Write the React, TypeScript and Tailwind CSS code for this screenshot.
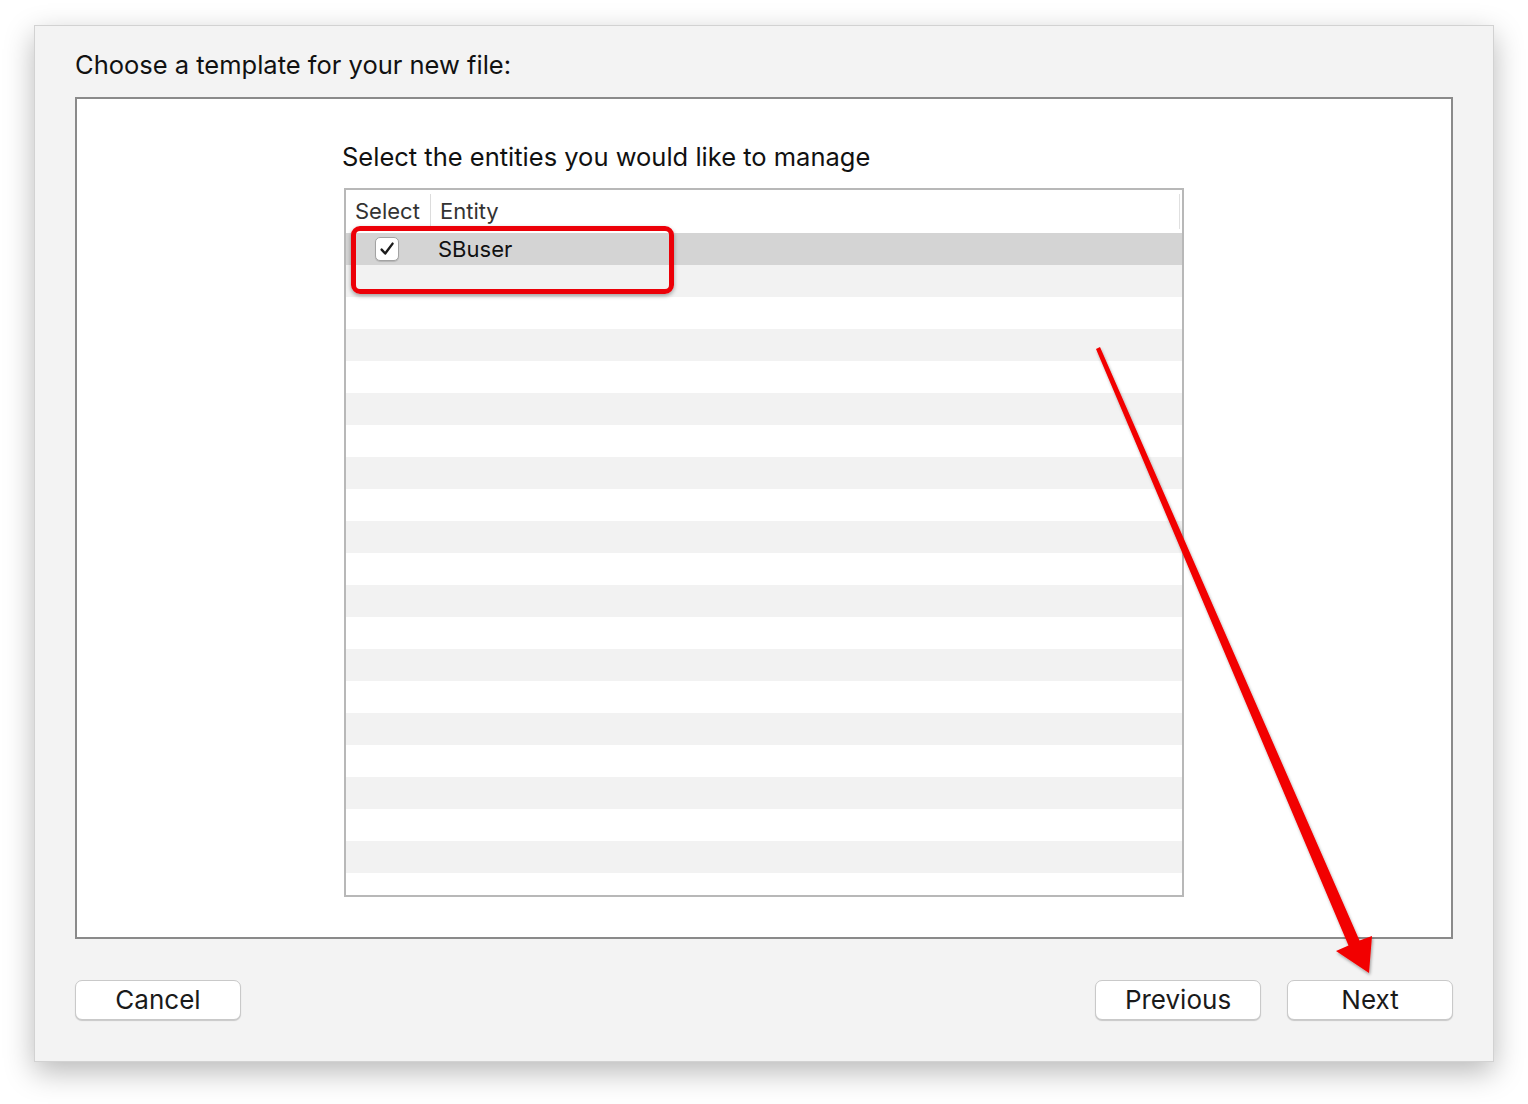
import React from 'react';

const rows = Array.from({ length: 21 }, (_, i) => i);

function Checkbox() {
  return (
    <div className="flex h-[24px] w-[24px] items-center justify-center rounded-[5px] border border-[#a3a3a3] bg-white shadow-[0_1px_1px_rgba(0,0,0,0.15)]">
      <svg width="18" height="18" viewBox="0 0 18 18" fill="none">
        <path d="M3.6 9.6l3.6 3.9L14.6 3.6" stroke="#1c1c1c" strokeWidth="2.4" strokeLinecap="round" strokeLinejoin="round" />
      </svg>
    </div>
  );
}

function MacButton({ label }: { label: string }) {
  return (
    <button className="flex h-[40px] w-[166px] items-center justify-center rounded-[7px] border border-[#c9c9c9] bg-white text-[26px] leading-none text-[#1a1a1a] shadow-[0_1px_1px_rgba(0,0,0,0.18)]">
      {label}
    </button>
  );
}

export default function App() {
  return (
    <div className="relative h-[1104px] w-[1528px] overflow-hidden bg-white pl-[34px] pt-[25px] font-[family-name:Inter,'Liberation_Sans',sans-serif]">
      {/* Dialog window */}
      <div className="flex h-[1037px] w-[1460px] flex-col border border-[#d2d2d2] bg-[#f3f3f3] px-[40px] pt-[23px] shadow-[0_10px_28px_rgba(0,0,0,0.28)]">
        <div className="h-[32px] text-[25.5px] leading-[32px] text-[#111]">Choose a template for your new file:</div>

        {/* Content box */}
        <div className="mt-[16px] flex h-[842px] w-[1378px] flex-col items-center border-2 border-[#8a8a8a] bg-white pt-[42px]">
          <div className="w-[840px]">
            <div className="-ml-[2px] h-[32px] text-[25.5px] leading-[32px] text-[#111]">Select the entities you would like to manage</div>

            {/* Table */}
            <div className="relative mt-[15px] flex h-[709px] w-[840px] flex-col overflow-hidden border-2 border-[#b8b8b8] bg-white">
              <div className="flex h-[43px] shrink-0 items-center bg-white text-[22px] text-[#333]">
                <div className="flex h-[35px] w-[85px] items-center border-r border-[#dcdcdc] pl-[9px]">Select</div>
                <div className="flex-1 pl-[9px]">Entity</div>
                <div className="mr-[2px] h-[35px] w-[1px] bg-[#e0e0e0]" />
              </div>

              <div className="flex h-[32px] shrink-0 items-center bg-[#d4d4d4]">
                <div className="w-[85px] pl-[29px]">
                  <Checkbox />
                </div>
                <div className="pl-[7px] text-[22px] text-[#111]">SBuser</div>
              </div>
              {rows.map((i) => (
                <div key={i} className={i % 2 === 0 ? 'h-[32px] shrink-0 bg-[#f2f2f2]' : 'h-[32px] shrink-0 bg-white'} />
              ))}

              {/* Red highlight */}
              <div className="absolute left-[5px] top-[36px] h-[68px] w-[323px] rounded-[9px] border-[5px] border-[#ec0008] shadow-[0_2px_4px_rgba(0,0,0,0.35)]" />
            </div>
          </div>
        </div>

        {/* Buttons */}
        <div className="mt-[41px] flex items-center">
          <MacButton label="Cancel" />
          <div className="flex-1" />
          <div className="flex gap-[26px]">
            <MacButton label="Previous" />
            <MacButton label="Next" />
          </div>
        </div>
      </div>

      {/* Red arrow annotation */}
      <svg className="pointer-events-none absolute left-0 top-0" width="1528" height="1104" viewBox="0 0 1528 1104">
        <defs>
          <filter id="arrowShadow" x="-10%" y="-10%" width="120%" height="120%">
            <feDropShadow dx="1" dy="2" stdDeviation="1.5" floodColor="#000" floodOpacity="0.35" />
          </filter>
        </defs>
        <polygon
          points="1096,349 1348.5,945.5 1336,951 1369,973 1372,936 1359.5,940.5 1100,347"
          fill="#f20000"
          filter="url(#arrowShadow)"
        />
      </svg>
    </div>
  );
}
